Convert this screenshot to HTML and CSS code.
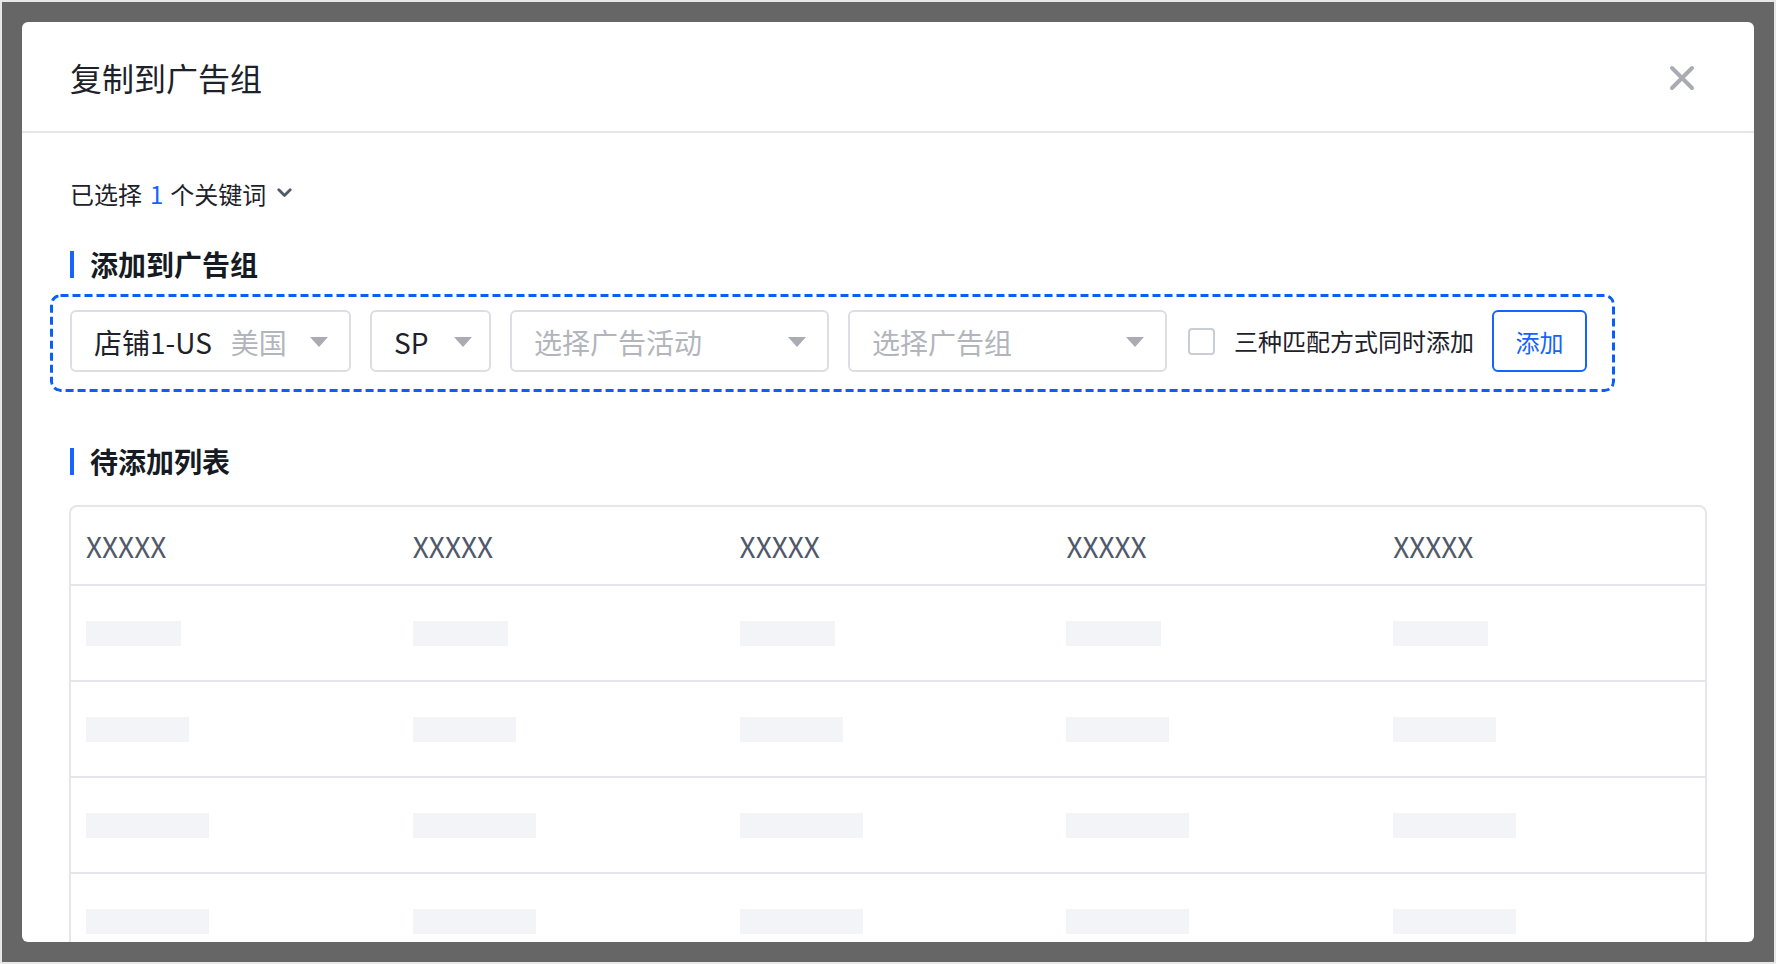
FILE: index.html
```html
<!DOCTYPE html>
<html lang="zh-CN">
<head>
<meta charset="utf-8">
<title>复制到广告组</title>
<link rel="stylesheet" href="styles.css">
</head>
<body>
<div class="overlay">
  <div class="modal">
    <div class="modal-header">
      <div class="modal-title">复制到广告组</div>
      <svg class="close" width="26" height="26" viewBox="0 0 26 26"><path d="M3 3 L23 23 M23 3 L3 23" stroke="#a9acb2" stroke-width="4" stroke-linecap="round" fill="none"/></svg>
    </div>
    <div class="modal-body">
      <div class="selected">已选择<span class="count">1</span>个关键词<svg class="chev" width="15" height="10" viewBox="0 0 15 10"><path d="M1.8 1.8 L7.5 7.5 L13.2 1.8" stroke="#4e5969" stroke-width="2.8" fill="none" stroke-linecap="round" stroke-linejoin="round"/></svg></div>

      <div class="section-title">添加到广告组</div>

      <div class="add-box">
        <div class="select sel-store"><span class="val">店铺1-US</span><span class="sub">美国</span><i class="arrow"></i></div>
        <div class="select sel-type"><span class="val">SP</span><i class="arrow"></i></div>
        <div class="select sel-wide"><span class="ph">选择广告活动</span><i class="arrow"></i></div>
        <div class="select sel-wide"><span class="ph">选择广告组</span><i class="arrow"></i></div>
        <div class="check"><span class="box"></span><span class="check-label">三种匹配方式同时添加</span></div>
        <div class="btn">添加</div>
      </div>

      <div class="section-title second">待添加列表</div>

      <div class="table">
        <div class="row head">
          <div class="cell">XXXXX</div><div class="cell">XXXXX</div><div class="cell">XXXXX</div><div class="cell">XXXXX</div><div class="cell">XXXXX</div>
        </div>
        <div class="row">
          <div class="cell"><span class="sk w1"></span></div><div class="cell"><span class="sk w1"></span></div><div class="cell"><span class="sk w1"></span></div><div class="cell"><span class="sk w1"></span></div><div class="cell"><span class="sk w1"></span></div>
        </div>
        <div class="row">
          <div class="cell"><span class="sk w2"></span></div><div class="cell"><span class="sk w2"></span></div><div class="cell"><span class="sk w2"></span></div><div class="cell"><span class="sk w2"></span></div><div class="cell"><span class="sk w2"></span></div>
        </div>
        <div class="row">
          <div class="cell"><span class="sk w3"></span></div><div class="cell"><span class="sk w3"></span></div><div class="cell"><span class="sk w3"></span></div><div class="cell"><span class="sk w3"></span></div><div class="cell"><span class="sk w3"></span></div>
        </div>
        <div class="row">
          <div class="cell"><span class="sk w3"></span></div><div class="cell"><span class="sk w3"></span></div><div class="cell"><span class="sk w3"></span></div><div class="cell"><span class="sk w3"></span></div><div class="cell"><span class="sk w3"></span></div>
        </div>
      </div>
    </div>
  </div>
</div>
</body>
</html>
```

FILE: styles.css
```css
* { box-sizing: border-box; }

html, body {
  margin: 0;
  padding: 0;
  background: #e8e8e8;
  font-family: "Noto Sans CJK SC", "Noto Sans", sans-serif;
  color: #1d2129;
}

.overlay {
  margin: 2px;
  height: 960px;
  background: #666666;
  padding: 20px;
}

.modal {
  background: #ffffff;
  border-radius: 6px;
  height: 100%;
  overflow: hidden;
  display: flex;
  flex-direction: column;
}

.modal-header {
  display: flex;
  justify-content: space-between;
  align-items: center;
  padding: 33px 59px 32px 48px;
  border-bottom: 2px solid #e5e6eb;
  flex: none;
}

.modal-title {
  font-size: 32px;
  line-height: 44px;
  font-weight: 400;
  color: #1d2129;
}

.close { display: block; margin-top: 1px; }

.modal-body {
  padding: 44px 47px 0 48px;
  flex: 1;
}

.selected {
  font-size: 24px;
  line-height: 34px;
  display: flex;
  align-items: center;
  color: #1d2129;
}

.count {
  color: #1664ff;
  margin: 0 7px 0 8px;
}

.chev { margin-left: 11px; margin-top: -3px; }

.section-title {
  margin-top: 34px;
  font-size: 28px;
  line-height: 38px;
  font-weight: 700;
  color: #161a22;
  display: flex;
  align-items: center;
}

.section-title::before {
  content: "";
  display: block;
  width: 4px;
  height: 27px;
  background: #1664ff;
  margin-right: 16px;
}

.section-title.second { margin-top: 50px; }

.add-box {
  margin-top: 11px;
  margin-left: -20px;
  width: max-content;
  display: flex;
  align-items: center;
  gap: 19px;
  padding: 16px 28px 20px 20px;
  border-radius: 10px;
  background-image: url("data:image/svg+xml,%3Csvg xmlns='http://www.w3.org/2000/svg' width='100%25' height='100%25'%3E%3Crect x='1.5' y='1.5' width='calc(100%25 - 3px)' height='calc(100%25 - 3px)' rx='9' ry='9' fill='none' stroke='%230a5ff5' stroke-width='3' stroke-dasharray='8 4'/%3E%3C/svg%3E");
}

.select {
  height: 62px;
  border: 2px solid #dcdee3;
  border-radius: 6px;
  padding: 1px 21px 0 22px;
  display: flex;
  align-items: center;
  font-size: 28px;
  white-space: nowrap;
}

.sel-store { width: 281px; }
.sel-type { width: 121px; }
.sel-wide { width: 319px; }

.val { color: #1d2129; }
.sub { color: #b2b5bb; margin-left: 19px; }
.ph { color: #b2b5bb; }

.arrow {
  margin-left: auto;
  width: 0;
  height: 0;
  border-left: 9px solid transparent;
  border-right: 9px solid transparent;
  border-top: 10px solid #a9acb2;
}

.sel-type .arrow { margin-left: 26px; }

.check {
  display: flex;
  align-items: center;
  gap: 19px;
  margin-left: 2px;
}

.box {
  width: 27px;
  height: 27px;
  border: 2px solid #c9cdd4;
  border-radius: 4px;
  background: #fff;
}

.check-label {
  font-size: 24px;
  line-height: 34px;
  color: #1d2129;
}

.btn {
  width: 95px;
  height: 62px;
  border: 2px solid #1664ff;
  border-radius: 6px;
  color: #1664ff;
  font-size: 24px;
  display: flex;
  align-items: center;
  justify-content: center;
  margin-left: -1px;
}

.table {
  margin-top: 25px;
  margin-left: -1px;
  border: 2px solid #e5e6eb;
  border-bottom: none;
  border-radius: 8px 8px 0 0;
}

.row {
  display: grid;
  grid-template-columns: repeat(5, 1fr);
  height: 96px;
  border-top: 2px solid #e5e6eb;
  align-items: center;
}

.row.head {
  border-top: none;
  height: 77px;
}

.cell {
  padding-left: 15px;
  display: flex;
  align-items: center;
}

.head .cell {
  font-size: 28px;
  line-height: 38px;
  color: #4e5969;
}

.sk {
  display: block;
  height: 25px;
  background: #f3f4f8;
}

.w1 { width: 95px; }
.w2 { width: 103px; }
.w3 { width: 123px; }
```
